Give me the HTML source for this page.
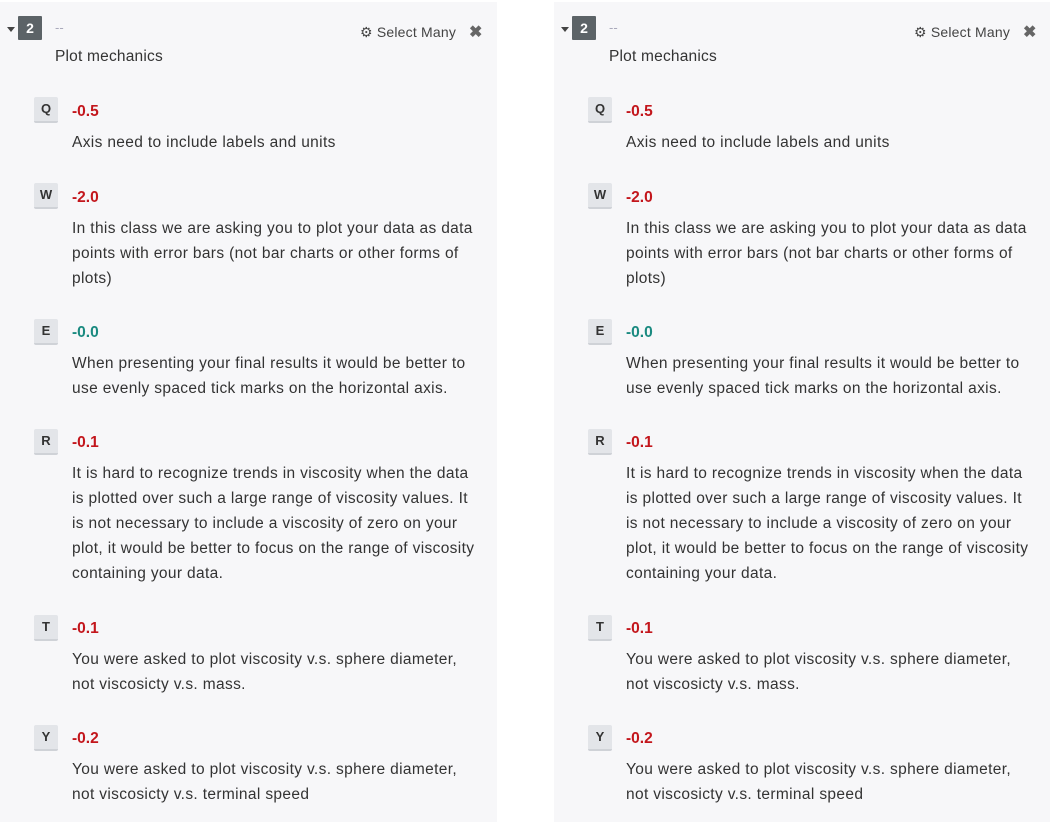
<!DOCTYPE html>
<html><head><meta charset="utf-8"><style>
body{margin:0;width:1050px;height:822px;background:#fff;position:relative;overflow:hidden;font-family:"Liberation Sans",sans-serif;color:#333;}
.p{position:absolute;top:2px;width:497px;height:820px;background:#f7f7f9;}
.p *{position:absolute;white-space:nowrap;}
.car{left:7px;top:25px;width:0;height:0;border-left:4px solid transparent;border-right:4px solid transparent;border-top:5px solid #444;}
.bd{left:18px;top:14px;width:24px;height:24px;background:#5c6367;color:#fff;font-weight:bold;font-size:14px;line-height:24px;text-align:center;border-radius:1px;}
.dash{left:55px;top:18px;color:#aab;font-size:13px;}
.sm{left:360px;top:22px;font-size:14px;color:#444;letter-spacing:0.2px;}
.x{left:469px;top:20px;font-size:16px;color:#666;font-weight:bold;}
.t{left:55px;top:46px;font-size:15.5px;letter-spacing:0.2px;}
.k{left:34px;width:24px;height:24px;background:#e3e5e9;border-bottom:2px solid #cfd2d7;border-radius:2px;font-size:13px;font-weight:bold;text-align:center;line-height:24px;color:#333;}
.s{left:72px;font-size:15.5px;font-weight:bold;color:#c3161c;}
.g{color:#1a8a80;}
.d{left:72px;font-size:15.5px;line-height:25px;letter-spacing:0.35px;}
</style></head><body>
<div class="p" style="left:0">
<div class="car"></div><div class="bd">2</div><div class="dash">--</div>
<div class="sm">⚙ Select Many</div><div class="x">✖</div>
<div class="t">Plot mechanics</div>
<div class="k" style="top:95px">Q</div><div class="s" style="top:101px">-0.5</div>
<div class="d" style="top:128px">Axis need to include labels and units</div>
<div class="k" style="top:181px">W</div><div class="s" style="top:187px">-2.0</div>
<div class="d" style="top:214px">In this class we are asking you to plot your data as data<br>points with error bars (not bar charts or other forms of<br>plots)</div>
<div class="k" style="top:317px">E</div><div class="s g" style="top:322px">-0.0</div>
<div class="d" style="top:349px">When presenting your final results it would be better to<br>use evenly spaced tick marks on the horizontal axis.</div>
<div class="k" style="top:427px">R</div><div class="s" style="top:432px">-0.1</div>
<div class="d" style="top:459px">It is hard to recognize trends in viscosity when the data<br>is plotted over such a large range of viscosity values. It<br>is not necessary to include a viscosity of zero on your<br>plot, it would be better to focus on the range of viscosity<br>containing your data.</div>
<div class="k" style="top:613px">T</div><div class="s" style="top:618px">-0.1</div>
<div class="d" style="top:645px">You were asked to plot viscosity v.s. sphere diameter,<br>not viscosicty v.s. mass.</div>
<div class="k" style="top:723px">Y</div><div class="s" style="top:728px">-0.2</div>
<div class="d" style="top:755px">You were asked to plot viscosity v.s. sphere diameter,<br>not viscosicty v.s. terminal speed</div>
</div>
<div class="p" style="left:554px">
<div class="car"></div><div class="bd">2</div><div class="dash">--</div>
<div class="sm">⚙ Select Many</div><div class="x">✖</div>
<div class="t">Plot mechanics</div>
<div class="k" style="top:95px">Q</div><div class="s" style="top:101px">-0.5</div>
<div class="d" style="top:128px">Axis need to include labels and units</div>
<div class="k" style="top:181px">W</div><div class="s" style="top:187px">-2.0</div>
<div class="d" style="top:214px">In this class we are asking you to plot your data as data<br>points with error bars (not bar charts or other forms of<br>plots)</div>
<div class="k" style="top:317px">E</div><div class="s g" style="top:322px">-0.0</div>
<div class="d" style="top:349px">When presenting your final results it would be better to<br>use evenly spaced tick marks on the horizontal axis.</div>
<div class="k" style="top:427px">R</div><div class="s" style="top:432px">-0.1</div>
<div class="d" style="top:459px">It is hard to recognize trends in viscosity when the data<br>is plotted over such a large range of viscosity values. It<br>is not necessary to include a viscosity of zero on your<br>plot, it would be better to focus on the range of viscosity<br>containing your data.</div>
<div class="k" style="top:613px">T</div><div class="s" style="top:618px">-0.1</div>
<div class="d" style="top:645px">You were asked to plot viscosity v.s. sphere diameter,<br>not viscosicty v.s. mass.</div>
<div class="k" style="top:723px">Y</div><div class="s" style="top:728px">-0.2</div>
<div class="d" style="top:755px">You were asked to plot viscosity v.s. sphere diameter,<br>not viscosicty v.s. terminal speed</div>
</div>
</body></html>
